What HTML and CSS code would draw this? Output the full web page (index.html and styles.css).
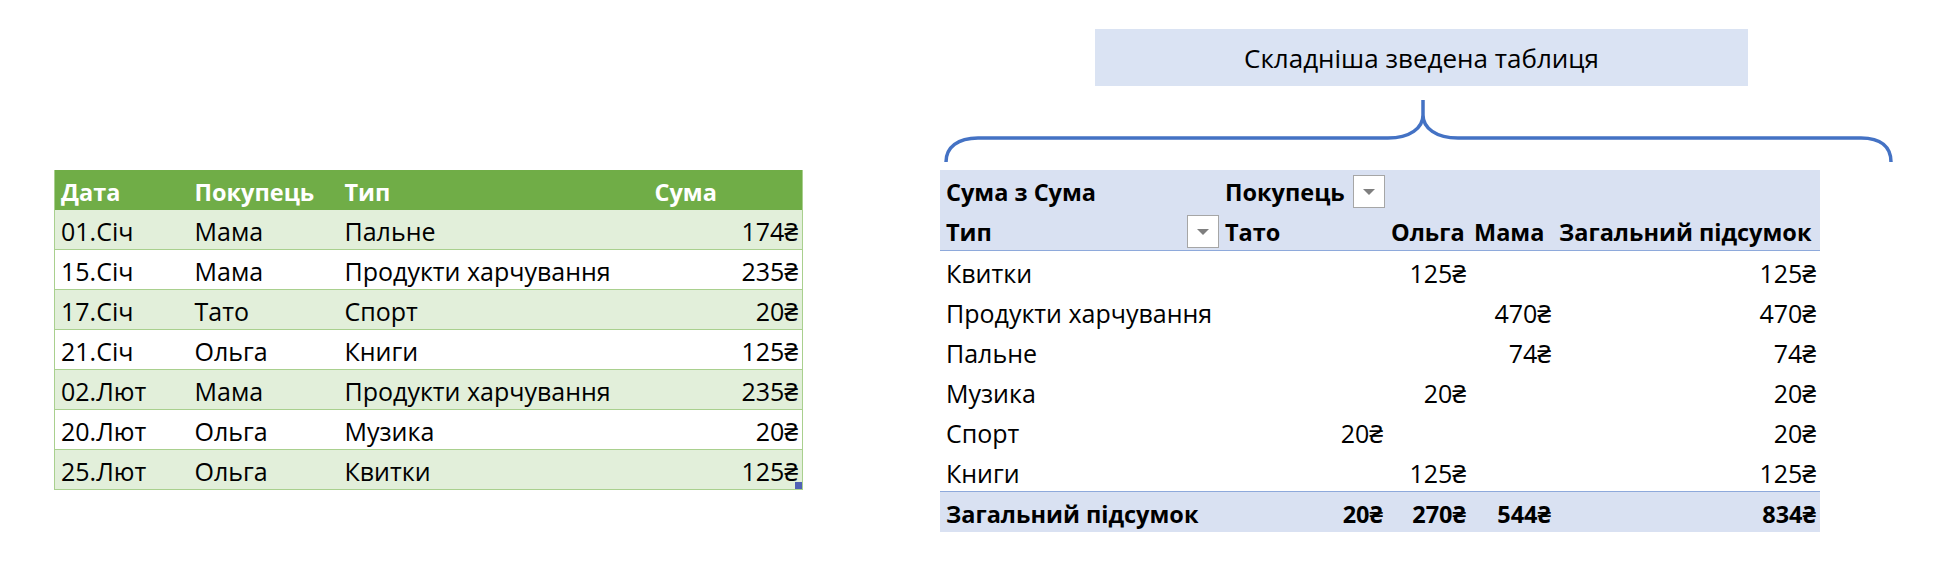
FILE: index.html
```html
<!DOCTYPE html>
<html lang="uk">
<head>
<meta charset="utf-8">
<title>Зведена таблиця</title>
<link rel="stylesheet" href="styles.css">
</head>
<body>
<main class="page">
  <table class="src">
    <colgroup><col class="c-date"><col class="c-buyer"><col class="c-type"><col class="c-sum"></colgroup>
    <thead>
      <tr><th>Дата</th><th>Покупець</th><th>Тип</th><th>Сума</th></tr>
    </thead>
    <tbody>
      <tr><td>01.Січ</td><td>Мама</td><td>Пальне</td><td class="num">174₴</td></tr>
      <tr><td>15.Січ</td><td>Мама</td><td>Продукти харчування</td><td class="num">235₴</td></tr>
      <tr><td>17.Січ</td><td>Тато</td><td>Спорт</td><td class="num">20₴</td></tr>
      <tr><td>21.Січ</td><td>Ольга</td><td>Книги</td><td class="num">125₴</td></tr>
      <tr><td>02.Лют</td><td>Мама</td><td>Продукти харчування</td><td class="num">235₴</td></tr>
      <tr><td>20.Лют</td><td>Ольга</td><td>Музика</td><td class="num">20₴</td></tr>
      <tr><td>25.Лют</td><td>Ольга</td><td>Квитки</td><td class="num last">125₴<span class="handle"></span></td></tr>
    </tbody>
  </table>

  <section class="pivot-area">
    <div class="title">Складніша зведена таблиця</div>
    <svg class="brace" width="956" height="68" viewBox="0 0 956 68" aria-hidden="true">
      <path d="M6,65 C6,50 18,41 38,41 L448,41 C470,41 483,31 483,18 L483,3 M483,18 C483,31 496,41 518,41 L921,41 C941,41 951,50 951,65" fill="none" stroke="#4472c4" stroke-width="3.5"/>
    </svg>
    <table class="pivot">
      <colgroup><col class="p-label"><col class="p-tato"><col class="p-olga"><col class="p-mama"><col class="p-total"></colgroup>
      <thead>
        <tr class="ph1">
          <th>Сума з Сума</th>
          <th class="dd-cell"><div class="dd-wrap"><span class="dd-text">Покупець</span><span class="dd"><i class="tri"></i></span></div></th>
          <th></th><th></th><th></th>
        </tr>
        <tr class="ph2">
          <th class="dd-cell"><div class="dd-wrap"><span class="dd-text">Тип</span><span class="dd"><i class="tri"></i></span></div></th>
          <th>Тато</th><th>Ольга</th><th>Мама</th><th>Загальний підсумок</th>
        </tr>
      </thead>
      <tbody>
        <tr><td>Квитки</td><td></td><td class="num">125₴</td><td></td><td class="num">125₴</td></tr>
        <tr><td>Продукти харчування</td><td></td><td></td><td class="num">470₴</td><td class="num">470₴</td></tr>
        <tr><td>Пальне</td><td></td><td></td><td class="num">74₴</td><td class="num">74₴</td></tr>
        <tr><td>Музика</td><td></td><td class="num">20₴</td><td></td><td class="num">20₴</td></tr>
        <tr><td>Спорт</td><td class="num">20₴</td><td></td><td></td><td class="num">20₴</td></tr>
        <tr><td>Книги</td><td></td><td class="num">125₴</td><td></td><td class="num">125₴</td></tr>
      </tbody>
      <tfoot>
        <tr><td>Загальний підсумок</td><td class="num">20₴</td><td class="num">270₴</td><td class="num">544₴</td><td class="num">834₴</td></tr>
      </tfoot>
    </table>
  </section>
</main>
</body>
</html>
```

FILE: styles.css
```css
* { box-sizing: border-box; }

body {
  margin: 0;
  background: #fff;
  color: #000;
  font-family: "Open Sans", "Noto Sans", "DejaVu Sans", sans-serif;
  font-size: 25px;
}

.page {
  display: flex;
  align-items: flex-start;
  padding-left: 54px;
  width: 1949px;
  height: 575px;
}

/* ---------- source table ---------- */
.src {
  margin-top: 170px;
  border-collapse: collapse;
  table-layout: fixed;
  width: 748px;
  border-left: 1px solid #a9d08e;
  border-right: 1px solid #a9d08e;
}
.c-date { width: 134px; }
.c-buyer { width: 150px; }
.c-type { width: 310px; }
.c-sum { width: 154px; }

.src th,
.src td {
  padding: 4px 4px 0 6px;
  text-align: left;
  white-space: nowrap;
  vertical-align: top;
}
.src th {
  height: 40px;
  line-height: 36px;
  background: #70ad47;
  color: #fff;
  font-weight: 700;
  font-size: 23.5px;
}
.src td {
  height: 39px;
  line-height: 35px;
}
.src tbody tr { border-bottom: 1px solid #a9d08e; }
.src tbody tr:nth-child(odd) { background: #e2efda; }
.src td.num { text-align: right; }
.src td.last { position: relative; }
.handle {
  position: absolute;
  right: 0;
  bottom: 0;
  width: 7px;
  height: 7px;
  background: #5061b6;
}

/* ---------- pivot area ---------- */
.pivot-area {
  margin-left: 137px;
  padding-top: 29px;
  width: 956px;
}
.title {
  margin-left: 155px;
  width: 653px;
  height: 57px;
  background: #dae3f3;
  display: flex;
  align-items: center;
  justify-content: center;
  font-size: 26px;
}
.brace {
  display: block;
  margin-top: 11px;
}

.pivot {
  margin-top: 5px;
  border-collapse: collapse;
  table-layout: fixed;
  width: 880px;
}
.p-label { width: 281px; }
.p-tato { width: 166px; }
.p-olga { width: 83px; }
.p-mama { width: 85px; }
.p-total { width: 265px; }

.pivot th,
.pivot td {
  height: 40px;
  padding: 4px 4px 0 6px;
  line-height: 36px;
  text-align: left;
  white-space: nowrap;
  vertical-align: top;
  overflow: visible;
}
.pivot th { font-weight: 700; font-size: 23.5px; }
.pivot thead tr { background: #d9e1f2; }
.pivot .ph2 { border-bottom: 1px solid #8ea9db; }
.pivot .ph2 th:nth-child(n+2) { padding-left: 4px; }
.pivot td.num { text-align: right; }
.pivot tfoot tr {
  background: #d9e1f2;
  border-top: 1px solid #8ea9db;
}
.pivot tfoot td {
  font-weight: 700;
  font-size: 23.5px;
}

.pivot th.dd-cell { padding: 0 2px 0 4px; }
.pivot .ph2 th.dd-cell { padding-left: 6px; }
.dd-wrap {
  display: flex;
  justify-content: space-between;
  align-items: flex-end;
  height: 40px;
}
.dd-text {
  align-self: flex-start;
  padding-top: 4px;
  line-height: 36px;
}
.dd {
  width: 32px;
  height: 33px;
  margin-bottom: 2px;
  background: #fff;
  border: 1px solid #a6a6a6;
  display: flex;
  align-items: center;
  justify-content: center;
}
.tri {
  width: 0;
  height: 0;
  border-left: 6px solid transparent;
  border-right: 6px solid transparent;
  border-top: 6px solid #7f7f7f;
}
```
